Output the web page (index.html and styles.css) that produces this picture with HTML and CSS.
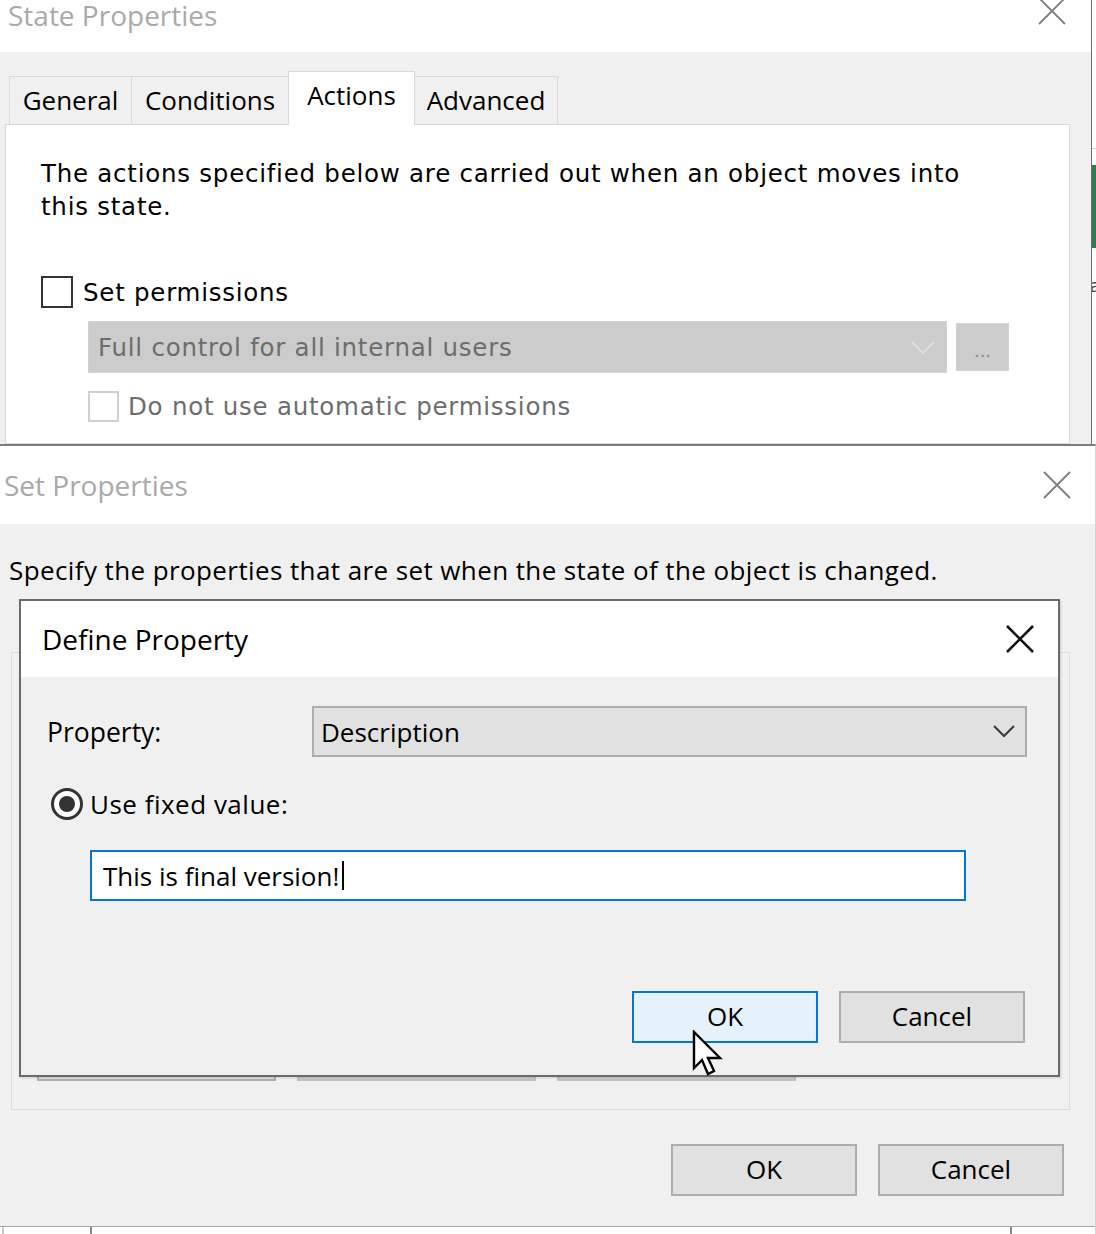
FILE: index.html
```html
<!DOCTYPE html>
<html>
<head>
<meta charset="utf-8">
<title>State Properties</title>
<link rel="stylesheet" href="styles.css">
</head>
<body>
<div class="screen">
  <div class="top-row">
    <div class="state-win">
      <div class="state-title">
        <span class="win-title">State Properties</span>
        <svg class="x-gray x-top" width="30" height="30" viewBox="0 0 30 30"><path d="M2 2 L28 28 M28 2 L2 28" /></svg>
      </div>
      <div class="state-body">
        <div class="tabs">
          <div class="tab t-general">General</div>
          <div class="tab t-conditions">Conditions</div>
          <div class="tab t-actions active">Actions</div>
          <div class="tab t-advanced">Advanced</div>
        </div>
        <div class="tabpanel">
          <p class="intro">The actions specified below are carried out when an object moves into<br>this state.</p>
          <div class="chk-row">
            <span class="chk"></span>
            <span>Set permissions</span>
          </div>
          <div class="perm-row">
            <div class="combo-dis">
              <span>Full control for all internal users</span>
              <svg width="24" height="13" viewBox="0 0 24 13"><path d="M1 1 L12 12 L23 1" /></svg>
            </div>
            <div class="dots-btn">...</div>
          </div>
          <div class="chk-row dis-row">
            <span class="chk chk-dis"></span>
            <span>Do not use automatic permissions</span>
          </div>
        </div>
      </div>
    </div>
    <div class="side-strip">
      <div class="side-line"></div>
      <div class="side-green"></div>
      <div class="side-a">a</div>
    </div>
  </div>

  <div class="set-win">
    <div class="set-title">
      <span class="win-title">Set Properties</span>
      <svg class="x-gray" width="28" height="28" viewBox="0 0 28 28"><path d="M1 1 L27 27 M27 1 L1 27" /></svg>
    </div>
    <div class="set-body">
      <p class="spec">Specify the properties that are set when the state of the object is changed.</p>
      <div class="groupbox">
        <div class="hidden-btns">
          <div class="hbtn hbtn-a"></div>
          <div class="hbtn hbtn-b"></div>
          <div class="hbtn hbtn-b"></div>
        </div>
      </div>
      <div class="main-btns">
        <div class="btn">OK</div>
        <div class="btn">Cancel</div>
      </div>
    </div>
    <div class="bottom-strip">
      <span class="tick t1"></span>
      <span class="tick t2"></span>
      <span class="tick t3"></span>
    </div>
  </div>

  <div class="define-dlg">
    <div class="define-title">
      <span>Define Property</span>
      <svg class="x-black" width="28" height="28" viewBox="0 0 28 28"><path d="M1 1 L27 27 M27 1 L1 27" /></svg>
    </div>
    <div class="define-body">
      <div class="prop-row">
        <span class="prop-label">Property:</span>
        <div class="combo">
          <span>Description</span>
          <svg width="22" height="13" viewBox="0 0 22 13"><path d="M1 1 L11 11 L21 1" /></svg>
        </div>
      </div>
      <div class="radio-row">
        <span class="radio"><span class="radio-dot"></span></span>
        <span class="radio-label">Use fixed value:</span>
      </div>
      <div class="text-input"><span>This is final version!</span><span class="caret"></span></div>
      <div class="dlg-btns">
        <div class="btn btn-default">OK</div>
        <div class="btn">Cancel</div>
      </div>
    </div>
  </div>

  <svg class="cursor" width="32" height="50" viewBox="0 0 32 50">
    <path d="M2 2 L2 38 L10 30 L16 44 L22 41 L16 28 L28 28 Z" />
  </svg>
</div>
</body>
</html>
```

FILE: styles.css
```css
* {
  box-sizing: border-box;
  margin: 0;
  padding: 0;
}

body {
  width: 1096px;
  height: 1234px;
  overflow: hidden;
  background: #ffffff;
  font-family: "Open Sans", "Liberation Sans", sans-serif;
  color: #000;
}

.screen {
  position: relative;
  width: 1096px;
  height: 1234px;
  overflow: hidden;
}

/* ---------- State Properties window (behind) ---------- */
.top-row {
  display: flex;
  height: 444px;
}

.state-win {
  width: 1092px;
  flex: none;
  border-right: 1px solid #6f6f6f;
  display: flex;
  flex-direction: column;
  overflow: hidden;
}

.state-title {
  height: 52px;
  flex: none;
  background: #fff;
  display: flex;
  justify-content: space-between;
  align-items: flex-start;
  padding: 0 24px 0 8px;
}

.win-title {
  font-size: 28px;
  color: #a9a9a9;
  line-height: 34px;
}

.state-title .win-title {
  margin-top: -2px;
}

.x-gray path {
  stroke: #7d7d7d;
  stroke-width: 1.8;
  fill: none;
}

.x-top {
  margin-top: -4px;
}

.state-body {
  flex: 1;
  background: #f0f0f0;
  padding: 19px 21px 0 5px;
  display: flex;
  flex-direction: column;
}

.tabs {
  display: flex;
  align-items: flex-end;
  height: 53px;
  padding-left: 4px;
  flex: none;
}

.tab {
  height: 48px;
  border: 1px solid #d9d9d9;
  border-bottom: none;
  background: #f0f0f0;
  font-size: 26px;
  line-height: 34px;
  padding-top: 6px;
  text-align: center;
  margin-left: -1px;
  color: #000;
}

.tab:first-child {
  margin-left: 0;
}

.t-general { width: 123px; }
.t-conditions { width: 158px; }
.t-actions { width: 127px; }
.t-advanced { width: 144px; }

.tab.active {
  height: 54px;
  background: #fff;
  margin-bottom: -1px;
  position: relative;
  z-index: 1;
}

.tabpanel {
  flex: 1;
  background: #fff;
  border: 1px solid #d9d9d9;
  padding: 32px 0 0 35px;
  font-family: "DejaVu Sans", "Verdana", sans-serif;
  font-size: 24.5px;
  letter-spacing: 0.75px;
}

.intro {
  line-height: 33px;
  white-space: nowrap;
}

.chk-row {
  display: flex;
  align-items: center;
  gap: 10px;
  margin-top: 53px;
  height: 32px;
}

.chk {
  width: 32px;
  height: 32px;
  border: 2px solid #333;
  background: #fff;
  flex: none;
}

.perm-row {
  display: flex;
  align-items: center;
  gap: 9px;
  margin: 13px 0 0 47px;
}

.combo-dis {
  width: 859px;
  height: 52px;
  flex: none;
  background: #cccccc;
  border: 1px solid #d3d3d3;
  color: #6d6d6d;
  display: flex;
  align-items: center;
  justify-content: space-between;
  padding: 0 11px 0 9px;
}

.combo-dis path {
  stroke: #e4e4e4;
  stroke-width: 1.6;
  fill: none;
}

.dots-btn {
  width: 53px;
  height: 48px;
  flex: none;
  background: #cccccc;
  border: 1px solid #d3d3d3;
  color: #8a8a8a;
  font-size: 18px;
  letter-spacing: 0;
  text-align: center;
  line-height: 54px;
}

.dis-row {
  margin: 17px 0 0 47px;
  color: #6d6d6d;
  gap: 9px;
}

.chk-dis {
  width: 31px;
  height: 31px;
  border: 2px solid #d0d0d0;
}

.side-strip {
  flex: 1;
  min-width: 0;
  overflow: hidden;
  background: #fff;
}

.side-line {
  margin-top: 148px;
  border-top: 1px solid #d0d0d0;
  height: 17px;
}

.side-green {
  height: 83px;
  background: #2f7d4f;
}

.side-a {
  margin-top: 28px;
  font-size: 18px;
  margin-left: -2px;
  color: #333;
  line-height: 18px;
}

/* ---------- Set Properties window ---------- */
.set-win {
  width: 1096px;
  border-top: 2px solid #7c7c7c;
  border-right: 1px solid #d5d5d5;
  display: flex;
  flex-direction: column;
  height: 790px;
}

.set-title {
  height: 78px;
  background: #fff;
  display: flex;
  justify-content: space-between;
  align-items: center;
  padding: 0 24px 0 4px;
  flex: none;
}

.set-body {
  height: 703px;
  flex: none;
  background: #f0f0f0;
  border-bottom: 1px solid #a3a3a3;
  padding-top: 29px;
}

.spec {
  font-size: 26px;
  line-height: 34px;
  padding-left: 9px;
  letter-spacing: 0.4px;
  white-space: nowrap;
}

.groupbox {
  margin: 65px 0 0 11px;
  width: 1059px;
  height: 458px;
  border: 1px solid #dcdcdc;
  display: flex;
  flex-direction: column;
  justify-content: flex-end;
  padding: 0 0 28px 25px;
}

.hidden-btns {
  display: flex;
  gap: 21px;
}

.hbtn {
  width: 239px;
  height: 50px;
}

.hbtn-a {
  background: #e1e1e1;
  border: 2px solid #adadad;
}

.hbtn-b {
  background: #cdcdcd;
  border: 2px solid #c0c0c0;
}

.main-btns {
  display: flex;
  justify-content: flex-end;
  gap: 21px;
  margin-top: 34px;
  padding-right: 31px;
}

.btn {
  width: 186px;
  height: 52px;
  background: #e1e1e1;
  border: 2px solid #adadad;
  font-size: 26px;
  line-height: 46px;
  text-align: center;
}

.bottom-strip {
  flex: 1;
  position: relative;
  background: #fff;
}

.tick {
  position: absolute;
  top: 0;
  width: 2px;
  height: 8px;
  background: #8a8a8a;
}

.t1 { left: 90px; }
.t2 { left: 1010px; }
.t3 { left: 2px; background: #c8c8c8; }

/* ---------- Define Property dialog (on top) ---------- */
.define-dlg {
  position: absolute;
  left: 19px;
  top: 599px;
  width: 1041px;
  height: 478px;
  border: 2px solid #6a6a6a;
  display: flex;
  flex-direction: column;
  box-shadow: 1px 1px 2px rgba(0, 0, 0, 0.15);
}

.define-title {
  height: 76px;
  flex: none;
  background: #fff;
  display: flex;
  align-items: center;
  justify-content: space-between;
  padding: 0 24px 0 21px;
  font-size: 28px;
}

.x-black path {
  stroke: #111;
  stroke-width: 2.6;
  fill: none;
}

.define-body {
  flex: 1;
  background: #f0f0f0;
  padding: 29px 31px 0 26px;
  font-size: 26px;
}

.prop-row {
  display: flex;
  align-items: center;
  justify-content: space-between;
}

.prop-label {
  font-size: 26.5px;
}

.combo {
  width: 715px;
  height: 51px;
  background: #e1e1e1;
  border: 2px solid #adadad;
  display: flex;
  align-items: center;
  justify-content: space-between;
  padding: 0 10px 0 7px;
}

.combo path {
  stroke: #3c3c3c;
  stroke-width: 2.2;
  fill: none;
}

.radio-row {
  display: flex;
  align-items: center;
  gap: 7px;
  margin: 31px 0 0 4px;
  height: 32px;
}

.radio-label {
  letter-spacing: 0.5px;
}

.radio {
  width: 32px;
  height: 32px;
  border-radius: 50%;
  border: 3px solid #333;
  background: #fff;
  display: flex;
  align-items: center;
  justify-content: center;
  flex: none;
}

.radio-dot {
  width: 16px;
  height: 16px;
  border-radius: 50%;
  background: #333;
}

.text-input {
  margin: 30px 0 0 43px;
  width: 876px;
  height: 51px;
  background: #fff;
  border: 2px solid #0078d7;
  display: flex;
  align-items: center;
  padding-left: 11px;
}

.caret {
  width: 2px;
  height: 29px;
  background: #000;
  margin-left: 3px;
}

.dlg-btns {
  display: flex;
  justify-content: flex-end;
  gap: 21px;
  margin-top: 90px;
  padding-right: 2px;
}

.btn-default {
  background: #e5f1fb;
  border-color: #0078d7;
}

.cursor {
  position: absolute;
  left: 692px;
  top: 1030px;
}

.cursor path {
  fill: #fff;
  stroke: #000;
  stroke-width: 2.4;
  stroke-linejoin: miter;
}
```
